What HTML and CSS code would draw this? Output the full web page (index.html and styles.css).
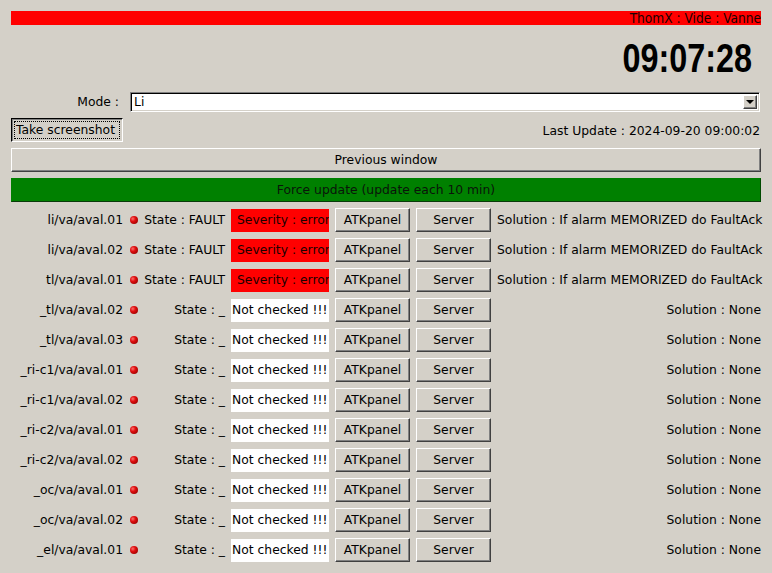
FILE: index.html
```html
<!DOCTYPE html>
<html>
<head>
<meta charset="utf-8">
<link rel="stylesheet" href="styles.css">
</head>
<body>
<div class="page">
  <div class="title-bar">ThomX : Vide : Vanne</div>
  <div class="clock"><span class="clock-text">09:07:28</span></div>
  <div class="mode-row">
    <div class="mode-label">Mode :</div>
    <div class="combo">
      <span class="combo-value">Li</span>
      <span class="combo-arrow"><span class="tri"></span></span>
    </div>
  </div>
  <div class="shot-row">
    <button class="btn btn-pressed"><span class="focus">Take screenshot</span></button>
    <div class="last-update">Last Update : 2024-09-20 09:00:02</div>
  </div>
  <button class="btn btn-wide">Previous window</button>
  <div class="force">Force update (update each 10 min)</div>

  <div class="rows">
    <div class="row">
      <div class="name">li/va/aval.01</div><div class="led"></div><div class="state">State : FAULT</div>
      <div class="sev sev-error">Severity : error</div>
      <button class="btn btn-sm">ATKpanel</button><button class="btn btn-sm">Server</button>
      <div class="solution">Solution : If alarm MEMORIZED do FaultAck</div>
    </div>
    <div class="row">
      <div class="name">li/va/aval.02</div><div class="led"></div><div class="state">State : FAULT</div>
      <div class="sev sev-error">Severity : error</div>
      <button class="btn btn-sm">ATKpanel</button><button class="btn btn-sm">Server</button>
      <div class="solution">Solution : If alarm MEMORIZED do FaultAck</div>
    </div>
    <div class="row">
      <div class="name">tl/va/aval.01</div><div class="led"></div><div class="state">State : FAULT</div>
      <div class="sev sev-error">Severity : error</div>
      <button class="btn btn-sm">ATKpanel</button><button class="btn btn-sm">Server</button>
      <div class="solution">Solution : If alarm MEMORIZED do FaultAck</div>
    </div>
    <div class="row">
      <div class="name">_tl/va/aval.02</div><div class="led"></div><div class="state">State : _</div>
      <div class="sev sev-none">Not checked !!!</div>
      <button class="btn btn-sm">ATKpanel</button><button class="btn btn-sm">Server</button>
      <div class="solution">Solution : None</div>
    </div>
    <div class="row">
      <div class="name">_tl/va/aval.03</div><div class="led"></div><div class="state">State : _</div>
      <div class="sev sev-none">Not checked !!!</div>
      <button class="btn btn-sm">ATKpanel</button><button class="btn btn-sm">Server</button>
      <div class="solution">Solution : None</div>
    </div>
    <div class="row">
      <div class="name">_ri-c1/va/aval.01</div><div class="led"></div><div class="state">State : _</div>
      <div class="sev sev-none">Not checked !!!</div>
      <button class="btn btn-sm">ATKpanel</button><button class="btn btn-sm">Server</button>
      <div class="solution">Solution : None</div>
    </div>
    <div class="row">
      <div class="name">_ri-c1/va/aval.02</div><div class="led"></div><div class="state">State : _</div>
      <div class="sev sev-none">Not checked !!!</div>
      <button class="btn btn-sm">ATKpanel</button><button class="btn btn-sm">Server</button>
      <div class="solution">Solution : None</div>
    </div>
    <div class="row">
      <div class="name">_ri-c2/va/aval.01</div><div class="led"></div><div class="state">State : _</div>
      <div class="sev sev-none">Not checked !!!</div>
      <button class="btn btn-sm">ATKpanel</button><button class="btn btn-sm">Server</button>
      <div class="solution">Solution : None</div>
    </div>
    <div class="row">
      <div class="name">_ri-c2/va/aval.02</div><div class="led"></div><div class="state">State : _</div>
      <div class="sev sev-none">Not checked !!!</div>
      <button class="btn btn-sm">ATKpanel</button><button class="btn btn-sm">Server</button>
      <div class="solution">Solution : None</div>
    </div>
    <div class="row">
      <div class="name">_oc/va/aval.01</div><div class="led"></div><div class="state">State : _</div>
      <div class="sev sev-none">Not checked !!!</div>
      <button class="btn btn-sm">ATKpanel</button><button class="btn btn-sm">Server</button>
      <div class="solution">Solution : None</div>
    </div>
    <div class="row">
      <div class="name">_oc/va/aval.02</div><div class="led"></div><div class="state">State : _</div>
      <div class="sev sev-none">Not checked !!!</div>
      <button class="btn btn-sm">ATKpanel</button><button class="btn btn-sm">Server</button>
      <div class="solution">Solution : None</div>
    </div>
    <div class="row">
      <div class="name">_el/va/aval.01</div><div class="led"></div><div class="state">State : _</div>
      <div class="sev sev-none">Not checked !!!</div>
      <button class="btn btn-sm">ATKpanel</button><button class="btn btn-sm">Server</button>
      <div class="solution">Solution : None</div>
    </div>
  </div>
</div>
</body>
</html>
```

FILE: styles.css
```css
html, body {
  margin: 0;
  padding: 0;
  background: #d4d0c8;
}
body {
  font-family: "DejaVu Sans", "Liberation Sans", sans-serif;
  font-size: 12.35px;
  color: #000;
  width: 772px;
  height: 573px;
  overflow: hidden;
}
.page {
  padding: 11px 11px 0 11px;
  display: flex;
  flex-direction: column;
}
.title-bar {
  background: #ff0000;
  height: 14px;
  line-height: 14px;
  font-family: "DejaVu Sans Condensed", "DejaVu Sans", sans-serif;
  font-stretch: condensed;
  font-size: 13.6px;
  text-align: right;
  color: #1a0000;
  white-space: nowrap;
  overflow: hidden;
}
.clock {
  font-family: "Liberation Sans", "Arial", sans-serif;
  font-weight: bold;
  font-size: 40px;
  line-height: 66px;
  height: 66px;
  text-align: right;
  padding-right: 9px;
}
.clock-text {
  display: inline-block;
  transform: scaleX(0.81);
  transform-origin: right center;
}
.mode-row {
  display: flex;
  align-items: center;
  margin-top: 1px;
  height: 20px;
}
.mode-label {
  width: 108px;
  text-align: right;
  margin-right: 11px;
}
.combo {
  flex: 1;
  margin-right: 1px;
  height: 20px;
  box-sizing: border-box;
  background: #fff;
  border: 1px solid;
  border-color: #808080 #ffffff #ffffff #808080;
  box-shadow: inset 1px 1px 0 #000, inset -1px -1px 0 #d4d0c8;
  display: flex;
  align-items: center;
  justify-content: space-between;
  padding: 1px 2px 1px 3px;
}
.combo-value {
  line-height: 16px;
}
.combo-arrow {
  width: 14px;
  height: 14px;
  box-sizing: border-box;
  background: #d4d0c8;
  border: 1px solid;
  border-color: #ffffff #404040 #404040 #ffffff;
  box-shadow: inset -1px -1px 0 #808080;
  display: flex;
  align-items: center;
  justify-content: center;
}
.tri {
  width: 0;
  height: 0;
  border-left: 4px solid transparent;
  border-right: 4px solid transparent;
  border-top: 4px solid #000;
}
.shot-row {
  display: flex;
  align-items: center;
  justify-content: space-between;
  margin-top: 6px;
  height: 24px;
}
.last-update {
  margin-right: 1px;
  padding-top: 1px;
}
.btn {
  font-family: "DejaVu Sans", "Liberation Sans", sans-serif;
  font-size: 12.35px;
  color: #000;
  background: #d4d0c8;
  margin: 0;
  padding: 0;
  height: 24px;
  box-sizing: border-box;
  border: 1px solid;
  border-color: #ffffff #404040 #404040 #ffffff;
  box-shadow: inset -1px -1px 0 #808080;
  border-radius: 0;
  text-align: center;
  white-space: nowrap;
}
.btn-pressed {
  width: 112px;
  border-color: #000000 #ffffff #ffffff #000000;
  box-shadow: inset 1px 1px 0 #808080;
  padding: 2px;
  display: flex;
}
.focus {
  flex: 1;
  border: 1px dotted #000;
  line-height: 17px;
  text-align: left;
  padding-left: 1px;
  overflow: hidden;
}
.btn-wide {
  margin-top: 6px;
  width: 750px;
}
.force {
  margin-top: 6px;
  height: 24px;
  line-height: 22px;
  box-sizing: border-box;
  background: #008000;
  border: 1px solid;
  border-color: #008000 #004a00 #0a3a0a #008000;
  text-align: center;
  color: #0a140a;
}
.rows {
  margin-top: 6px;
  display: flex;
  flex-direction: column;
  gap: 6px;
}
.row {
  display: grid;
  grid-template-columns: 113px 8px 81px 98px 75px 75px 1fr;
  column-gap: 6px;
  align-items: center;
  height: 24px;
}
.name {
  text-align: right;
  padding-right: 1px;
  white-space: nowrap;
}
.led {
  width: 8px;
  height: 8px;
  border-radius: 50%;
  background: radial-gradient(circle at 35% 35%, #ff7070 0%, #e01010 35%, #a00000 80%, #700000 100%);
}
.state {
  text-align: right;
  white-space: nowrap;
}
.sev {
  height: 23px;
  line-height: 23px;
  overflow: hidden;
  white-space: nowrap;
}
.sev-error {
  background: #ff0000;
  color: #1a0000;
  padding-left: 6px;
}
.sev-none {
  background: #ffffff;
  padding-left: 1px;
}
.btn-sm {
  width: 75px;
}
.solution {
  text-align: right;
  white-space: nowrap;
}
```
